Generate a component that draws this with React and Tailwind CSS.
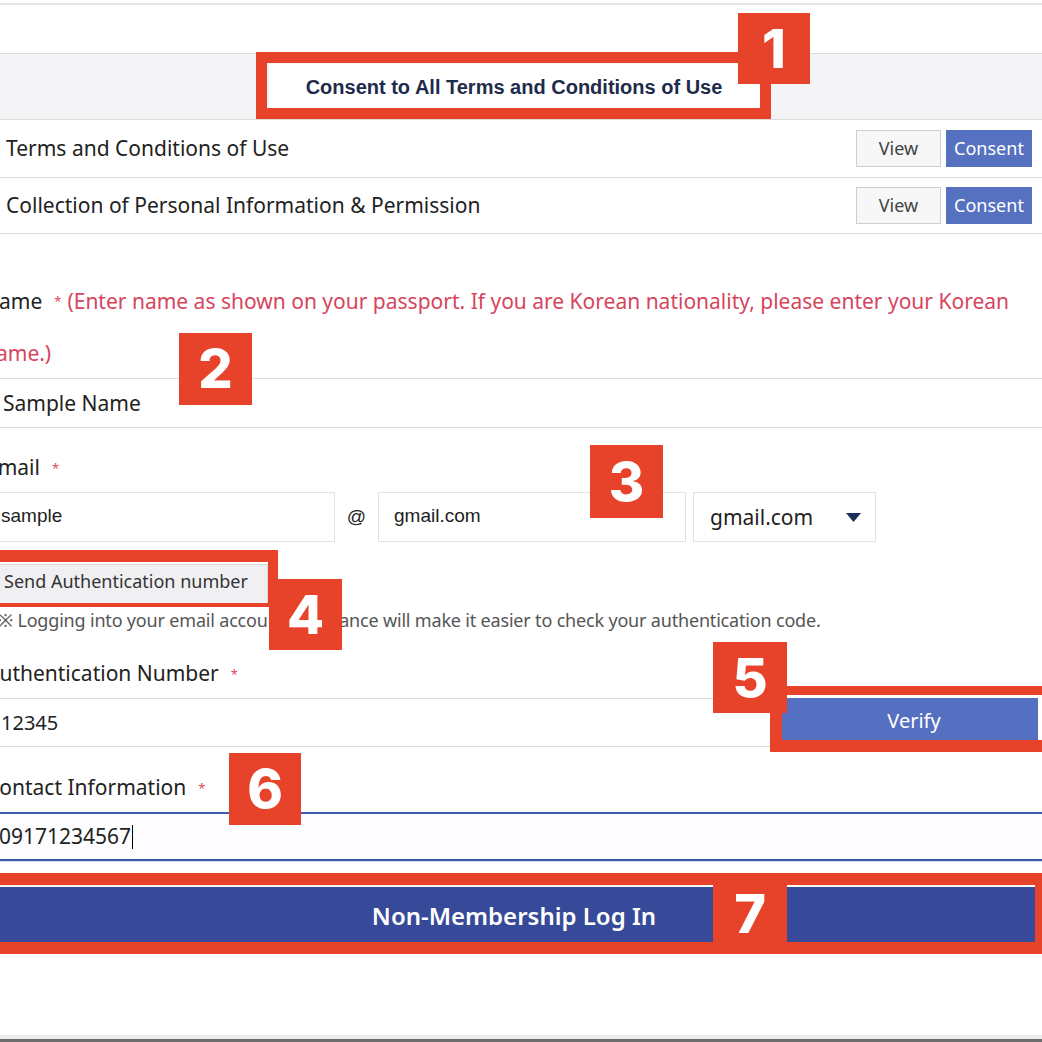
import React from 'react';

// annotation square with a number in it
function Marker({ n, className }) {
  return (
    <div
      className={`absolute bg-[#e6432a] text-white flex items-center justify-center font-['Inter'] font-extrabold text-[54px] leading-none ${className}`}
    >
      {n}
    </div>
  );
}

function Req() {
  return <span className="text-[#e0475e] text-[13px] align-middle ml-[12px] mr-[6px] relative -top-[2px]">*</span>;
}

export default function App() {
  return (
    <div className="relative w-[1042px] h-[1042px] overflow-hidden bg-white font-['Noto_Sans'] text-[#222]">
      <div className="-ml-[14px] w-[1056px]">
        {/* top rule */}
        <div className="h-[3px]" />
        <div className="h-[2px] bg-[#e6e6e6]" />

        {/* consent all */}
        <div className="mt-[48px] h-[66px] border-t border-[#dcdcdc] bg-[#f4f4f6] flex items-center justify-center">
          <button className="w-[491px] h-[45px] bg-white font-['Liberation_Sans'] font-bold text-[20px] text-[#1e2b4a]">
            Consent to All Terms and Conditions of Use
          </button>
        </div>

        {/* terms rows */}
        <div className="h-[58px] border-t border-[#dcdcdc] flex items-center justify-between pl-[20px] pr-[10px]">
          <span className="text-[21px]">Terms and Conditions of Use</span>
          <div className="flex gap-[5px]">
            <button className="w-[85px] h-[37px] bg-[#f7f7f7] border border-[#cfcfcf] text-[18px] text-[#444]">View</button>
            <button className="w-[86px] h-[37px] bg-[#5571c0] text-[18px] text-white">Consent</button>
          </div>
        </div>
        <div className="h-[57px] border-t border-b border-[#dcdcdc] flex items-center justify-between pl-[20px] pr-[10px]">
          <span className="text-[21px]">Collection of Personal Information &amp; Permission</span>
          <div className="flex gap-[5px]">
            <button className="w-[85px] h-[37px] bg-[#f7f7f7] border border-[#cfcfcf] text-[18px] text-[#444]">View</button>
            <button className="w-[86px] h-[37px] bg-[#5571c0] text-[18px] text-white">Consent</button>
          </div>
        </div>

        {/* name */}
        <div className="mt-[42px] -ml-[3px] text-[21px] leading-[50px]">
          Name<Req />
          <span className="text-[#d6455d]">
            (Enter name as shown on your passport. If you are Korean nationality, please enter your Korean
            <br />
            name.)
          </span>
        </div>
        <div className="h-[50px] border-t border-b border-[#dcdcdc] flex items-center pl-[17px] text-[21px]">
          Sample Name
        </div>

        {/* email */}
        <div className="mt-[14px] h-[50px] leading-[50px] text-[21px]">
          Email<Req />
        </div>
        <div className="flex items-center h-[50px]">
          <div className="w-[349px] h-[50px] border border-[#e2e2e2] flex items-center pl-[14px] pb-[2px] font-['Liberation_Sans'] text-[19px]">
            sample
          </div>
          <span className="w-[43px] text-center text-[19px] font-['Liberation_Sans']">@</span>
          <div className="w-[308px] h-[50px] border border-[#e2e2e2] flex items-center pl-[15px] pb-[2px] font-['Liberation_Sans'] text-[19px]">
            gmail.com
          </div>
          <div className="ml-[7px] w-[183px] h-[50px] border border-[#e2e2e2] flex items-center justify-between pl-[16px] pr-[14px] text-[21px]">
            gmail.com
            <svg width="15" height="9" viewBox="0 0 15 9">
              <polygon points="0,0 15,0 7.5,9" fill="#1b2d5b" />
            </svg>
          </div>
        </div>

        <button className="mt-[22px] w-[282px] h-[42px] bg-[#f0f0f3] border border-[#d8d8d8] text-left pl-[17px] pb-[8px] text-[18px] text-[#333]">
          Send Authentication number
        </button>
        <p className="mt-[2px] leading-[24px] text-[18px] text-[#555] tracking-[-0.01em] pl-[12px]">
          ※ Logging into your email account in advance will make it easier to check your authentication code.
        </p>

        {/* auth number */}
        <div className="mt-[16px] h-[50px] leading-[50px] text-[21px]">
          Authentication Number<Req />
        </div>
        <div className="flex items-start">
          <div className="flex-1 h-[49px] border-t border-b border-[#dcdcdc] flex items-center pl-[15px] text-[20px]">
            12345
          </div>
          <button className="ml-[12px] mr-[4px] w-[256px] h-[45px] bg-[#5670c1] text-white text-[20px] pl-[8px]">Verify</button>
        </div>

        {/* contact */}
        <div className="mt-[15px] h-[50px] leading-[50px] text-[21px]">
          Contact Information<Req />
        </div>
        <div className="h-[49px] border-t-2 border-b-2 border-[#3b5aa9] bg-[#fdfdff] shadow-[0_1px_0_#cddcf4] flex items-center pl-[13px] text-[21px]">
          09171234567
          <span className="ml-[1px] w-[1px] h-[24px] bg-black" />
        </div>

        {/* login */}
        <button className="mt-[26px] w-full h-[57px] bg-[#374a99] text-white text-[24px] font-semibold">
          Non-Membership Log In
        </button>

        <div className="mt-[91px] h-[4px] bg-[#ececec]" />
        <div className="h-[5px] bg-[#6e6e6e]" />
      </div>

      {/* annotations */}
      <div className="absolute left-[256px] top-[52px] w-[515px] h-[67px] border-[11px] border-[#e6432a]" />
      <div className="absolute left-[-20px] top-[550px] w-[298px] h-[57px] border-t-[12px] border-r-[10px] border-b-[4px] border-[#e6432a]" />
      <div className="absolute left-[770px] top-[686px] w-[290px] h-[66px] border-t-[9px] border-l-[12px] border-b-[12px] border-r-[12px] border-[#e6432a]" />
      <div className="absolute left-[-20px] top-[873px] w-[1062px] h-[81px] border-y-[12px] border-r-[7px] border-[#e6432a]" />

      <Marker n="1" className="left-[738px] top-[13px] w-[72px] h-[71px]" />
      <Marker n="2" className="left-[179px] top-[333px] w-[73px] h-[72px]" />
      <Marker n="3" className="left-[590px] top-[445px] w-[73px] h-[73px]" />
      <Marker n="4" className="left-[269px] top-[579px] w-[73px] h-[71px]" />
      <Marker n="5" className="left-[713px] top-[642px] w-[74px] h-[71px]" />
      <Marker n="6" className="left-[229px] top-[753px] w-[72px] h-[72px]" />
      <Marker n="7" className="left-[713px] top-[875px] w-[74px] h-[77px]" />
    </div>
  );
}
